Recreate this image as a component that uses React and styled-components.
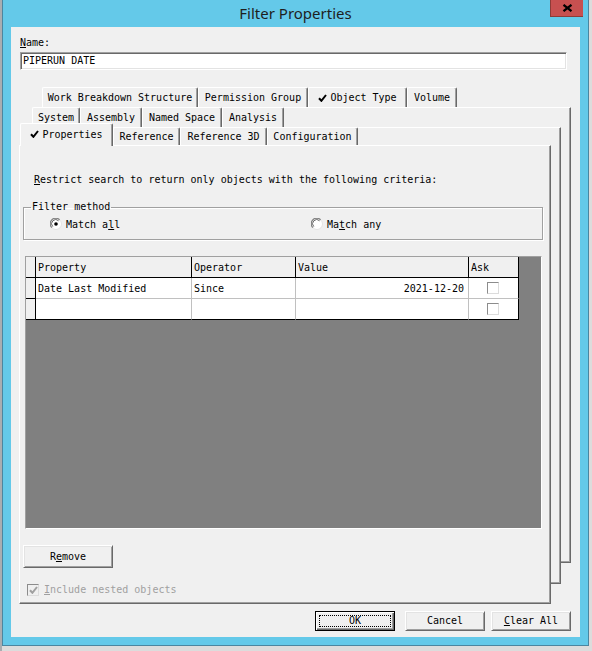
import React from 'react';
import styled, { createGlobalStyle } from 'styled-components';

const GlobalStyle = createGlobalStyle`
  html, body {
    margin: 0;
    padding: 0;
  }
  body {
    background: #dcdcdc;
    font-family: 'DejaVu Sans Mono', 'Liberation Mono', monospace;
    font-size: 10px;
    color: #000;
  }
`;

const Desktop = styled.div`
  width: 592px;
  height: 651px;
  box-sizing: border-box;
  border-left: 2px solid #a9adb1;
  overflow: hidden;
`;

const Window = styled.div`
  width: 587px;
  height: 646px;
  box-sizing: border-box;
  background: #64c9e9;
  border: 1px solid #4b86a0;
  border-top: none;
  display: flex;
  flex-direction: column;
  padding-bottom: 8px;
`;

const TitleBar = styled.div`
  height: 27px;
  flex-shrink: 0;
  display: grid;
  grid-template-columns: 1fr auto 1fr;
  align-items: start;
`;

const Title = styled.div`
  grid-column: 2;
  font-family: 'Noto Sans', 'Open Sans', sans-serif;
  font-size: 15px;
  line-height: 26px;
  color: #1e1e1e;
`;

const CloseButton = styled.div`
  grid-column: 3;
  justify-self: end;
  margin-right: 5px;
  width: 33px;
  height: 17px;
  box-sizing: border-box;
  background: #c75050;
  border-left: 1px solid #8d3b37;
  border-bottom: 1px solid #8d3b37;
  display: flex;
  align-items: center;
  justify-content: center;
`;

const Client = styled.div`
  flex: 1;
  margin: 0 8px;
  background: #f0f0f0;
  display: flex;
  flex-direction: column;
  padding: 0 9px 0 8px;
`;

const Label = styled.div`
  margin: 10px 0 0 1px;
  line-height: 12px;
`;

const Key = styled.span`
  text-decoration: underline;
  text-underline-offset: 1px;
`;

const NameField = styled.div`
  margin: 3px 0 0 1px;
  width: 547px;
  height: 18px;
  box-sizing: border-box;
  background: #fff;
  border: 1px solid;
  border-color: #a0a0a0 #fff #fff #a0a0a0;
  box-shadow: inset 1px 1px #696969, inset -1px -1px #e3e3e3;
  padding-left: 2px;
  line-height: 16px;
`;

const TabStack = styled.div`
  margin-top: 17px;
  width: 552px;
  height: 517px;
  display: grid;
`;

const Layer = styled.div`
  grid-area: 1 / 1;
  display: flex;
  flex-direction: column;
  margin: ${p => p.$margin};
  min-height: 0;
`;

const TabRow = styled.div`
  display: flex;
  align-items: flex-end;
  height: ${p => p.$h}px;
  padding-left: ${p => p.$pad}px;
  flex-shrink: 0;
`;

const Tab = styled.div`
  box-sizing: border-box;
  width: ${p => p.$w}px;
  height: ${p => (p.$active ? 23 : p.$h)}px;
  margin-bottom: ${p => (p.$active ? -1 : 0)}px;
  position: ${p => (p.$active ? 'relative' : 'static')};
  z-index: ${p => (p.$active ? 1 : 'auto')};
  display: flex;
  align-items: center;
  justify-content: center;
  gap: 3px;
  background: #f0f0f0;
  border-top: 1px solid #fff;
  border-left: 1px solid #fff;
  border-right: 1px solid #696969;
  box-shadow: inset -1px 0 #a0a0a0;
  border-radius: 2px 2px 0 0;
  white-space: nowrap;
  padding-bottom: ${p => (p.$active ? 2 : 0)}px;
`;

const Frame = styled.div`
  flex: 1;
  box-sizing: border-box;
  background: #f0f0f0;
  border-top: 1px solid #fff;
  border-left: 1px solid #fff;
  border-right: 1px solid #696969;
  border-bottom: 1px solid #696969;
  box-shadow: inset -1px -1px #a0a0a0;
  display: flex;
  flex-direction: column;
`;

const Hint = styled.div`
  margin: 28px 0 0 14px;
  line-height: 12px;
`;

const GroupBox = styled.fieldset`
  margin: 15px 0 0 3px;
  padding: 0 0 4px;
  width: 520px;
  box-sizing: border-box;
  border: 1px solid #a0a0a0;
  box-shadow: inset 1px 1px #fff, 1px 1px #fff;
  min-inline-size: 0;
`;

const Legend = styled.legend`
  margin-left: 7px;
  padding: 0 1px;
  line-height: 12px;
`;

const RadioRow = styled.div`
  display: flex;
  align-items: center;
  height: 22px;
  padding-left: 26px;
`;

const RadioOption = styled.div`
  width: ${p => p.$w}px;
  display: flex;
  align-items: center;
  gap: 4px;
`;

const GridWell = styled.div`
  margin: 16px 0 0 5px;
  width: 517px;
  height: 273px;
  box-sizing: border-box;
  background: #808080;
  border: 1px solid;
  border-color: #a0a0a0 #fff #fff #a0a0a0;
`;

const Table = styled.div`
  display: grid;
  grid-template-columns: 10px 156px 104px 173px 50px;
  grid-auto-rows: 21px;
  width: 493px;
`;

const Cell = styled.div`
  box-sizing: border-box;
  display: flex;
  align-items: center;
  justify-content: ${p =>
    p.$align === 'right' ? 'flex-end' : p.$align === 'center' ? 'center' : 'flex-start'};
  padding: ${p => (p.$align === 'right' ? '0 4px 0 0' : p.$align === 'center' ? '0 2px 0 0' : '0 0 0 2px')};
  background: ${p => (p.$head ? '#f0f0f0' : '#fff')};
  border-right: 1px solid ${p => (p.$darkRight ? '#000' : '#c0c0c0')};
  border-bottom: 1px solid ${p => (p.$darkBottom ? '#000' : '#c0c0c0')};
  white-space: nowrap;
  overflow: hidden;
`;

const Box = styled.span`
  width: 12px;
  height: 12px;
  box-sizing: border-box;
  display: inline-flex;
  align-items: center;
  justify-content: center;
  background: ${p => (p.$disabled ? '#f0f0f0' : '#fff')};
  border: 1px solid;
  border-color: #8c8c8c #dcdcdc #dcdcdc #8c8c8c;
`;

const PushButton = styled.div`
  box-sizing: border-box;
  width: ${p => p.$w}px;
  height: ${p => p.$h}px;
  display: flex;
  align-items: center;
  justify-content: center;
  background: #f0f0f0;
  border: 1px solid;
  border-color: ${p => (p.$default ? '#000' : '#fff #696969 #696969 #fff')};
  box-shadow: ${p =>
    p.$default
      ? 'inset 1px 1px #fff, inset -1px -1px #696969, inset -2px -2px #a0a0a0'
      : 'inset 1px 1px #e3e3e3, inset -1px -1px #a0a0a0'};
  line-height: 12px;
`;

const FocusRing = styled.span`
  flex: 1;
  align-self: stretch;
  margin: 3px;
  border: 1px dotted #000;
  display: flex;
  align-items: center;
  justify-content: center;
`;

const RemoveButton = styled(PushButton)`
  margin: 16px 0 0 3px;
`;

const NestedRow = styled.div`
  margin: 15px 0 0 7px;
  display: flex;
  align-items: center;
  gap: 5px;
  color: #a0a0a0;
  line-height: 13px;
`;

const ButtonBar = styled.div`
  margin-top: 7px;
  display: flex;
  justify-content: flex-end;
`;

const BarButton = styled(PushButton)`
  margin-left: ${p => p.$gap}px;
`;

const Check = ({ color = '#000' }) => (
  <svg width="9" height="8" viewBox="0 0 9 8">
    <path d="M1 4.2 L3.4 6.8 L8 1" fill="none" stroke={color} strokeWidth="2" />
  </svg>
);

const Radio = ({ on }) => (
  <svg width="12" height="12" viewBox="0 0 12 12">
    <circle cx="6" cy="6" r="5.5" fill="#fff" stroke="#e3e3e3" />
    <path d="M1.8 9.6 A5 5 0 0 1 9.6 1.8" fill="none" stroke="#808080" strokeWidth="1.2" />
    <path d="M2.8 8.6 A3.8 3.8 0 0 1 8.6 2.8" fill="none" stroke="#404040" strokeWidth="0.8" />
    {on && <circle cx="6" cy="6" r="1.8" fill="#000" />}
  </svg>
);

const rowA = [
  { label: 'Work Breakdown Structure', w: 156 },
  { label: 'Permission Group', w: 110 },
  { label: 'Object Type', w: 99, checked: true },
  { label: 'Volume', w: 50 },
];

const rowB = [
  { label: 'System', w: 48 },
  { label: 'Assembly', w: 62 },
  { label: 'Named Space', w: 80 },
  { label: 'Analysis', w: 62 },
];

const rowC = [
  { label: 'Properties', w: 93, checked: true, active: true },
  { label: 'Reference', w: 67 },
  { label: 'Reference 3D', w: 87 },
  { label: 'Configuration', w: 91 },
];

const columns = ['Property', 'Operator', 'Value', 'Ask'];

const rows = [
  { property: 'Date Last Modified', operator: 'Since', value: '2021-12-20' },
  { property: '', operator: '', value: '' },
];

// rowH is the height of the strip; tabH the height of an unselected tab
function Tabs({ items, rowH, tabH, pad }) {
  return (
    <TabRow $h={rowH} $pad={pad}>
      {items.map(t => (
        <Tab key={t.label} $w={t.w} $h={tabH} $active={t.active}>
          {t.checked && <Check />}
          <span>{t.label}</span>
        </Tab>
      ))}
    </TabRow>
  );
}

export default function App() {
  return (
    <>
      <GlobalStyle />
      <Desktop>
        <Window>
          <TitleBar>
            <Title>Filter Properties</Title>
            <CloseButton>
              <svg width="11" height="8" viewBox="0 0 11 8">
                <path d="M1.5 0.8 L9.5 7.2 M9.5 0.8 L1.5 7.2" stroke="#000" strokeWidth="2.2" />
              </svg>
            </CloseButton>
          </TitleBar>
          <Client>
            <Label>
              <Key>N</Key>ame:
            </Label>
            <NameField>PIPERUN DATE</NameField>

            <TabStack>
              <Layer $margin="0 0 41px 21px">
                <Tabs items={rowA} rowH={20} tabH={20} pad={2} />
                <Frame />
              </Layer>
              <Layer $margin="20px 10px 20px 11px">
                <Tabs items={rowB} rowH={20} tabH={20} pad={2} />
                <Frame />
              </Layer>
              <Layer $margin="36px 20px 0 0">
                <Tabs items={rowC} rowH={22} tabH={18} pad={1} />
                <Frame>
                  <Hint>
                    <Key>R</Key>estrict search to return only objects with the following criteria:
                  </Hint>
                  <GroupBox>
                    <Legend>Filter method</Legend>
                    <RadioRow>
                      <RadioOption $w={261}>
                        <Radio on />
                        <span>
                          Match a<Key>l</Key>l
                        </span>
                      </RadioOption>
                      <RadioOption>
                        <Radio />
                        <span>
                          Ma<Key>t</Key>ch any
                        </span>
                      </RadioOption>
                    </RadioRow>
                  </GroupBox>

                  <GridWell>
                    <Table>
                      <Cell $head $darkRight $darkBottom />
                      {columns.map(c => (
                        <Cell key={c} $head $darkRight $darkBottom>
                          {c}
                        </Cell>
                      ))}
                      {rows.map((r, i) => {
                        const last = i === rows.length - 1;
                        return (
                          <React.Fragment key={i}>
                            <Cell $head $darkRight $darkBottom />
                            <Cell $darkBottom={last}>{r.property}</Cell>
                            <Cell $darkBottom={last}>{r.operator}</Cell>
                            <Cell $darkBottom={last} $align="right">
                              {r.value}
                            </Cell>
                            <Cell $darkBottom={last} $darkRight $align="center">
                              <Box />
                            </Cell>
                          </React.Fragment>
                        );
                      })}
                    </Table>
                  </GridWell>

                  <RemoveButton $w={90} $h={23}>
                    <span>
                      R<Key>e</Key>move
                    </span>
                  </RemoveButton>

                  <NestedRow>
                    <Box $disabled>
                      <Check color="#a0a0a0" />
                    </Box>
                    <span>
                      <Key>I</Key>nclude nested objects
                    </span>
                  </NestedRow>
                </Frame>
              </Layer>
            </TabStack>

            <ButtonBar>
              <BarButton $w={80} $h={20} $default $gap={0}>
                <FocusRing>OK</FocusRing>
              </BarButton>
              <BarButton $w={80} $h={20} $gap={10}>
                Cancel
              </BarButton>
              <BarButton $w={80} $h={20} $gap={6}>
                <span>
                  <Key>C</Key>lear All
                </span>
              </BarButton>
            </ButtonBar>
          </Client>
        </Window>
      </Desktop>
    </>
  );
}
